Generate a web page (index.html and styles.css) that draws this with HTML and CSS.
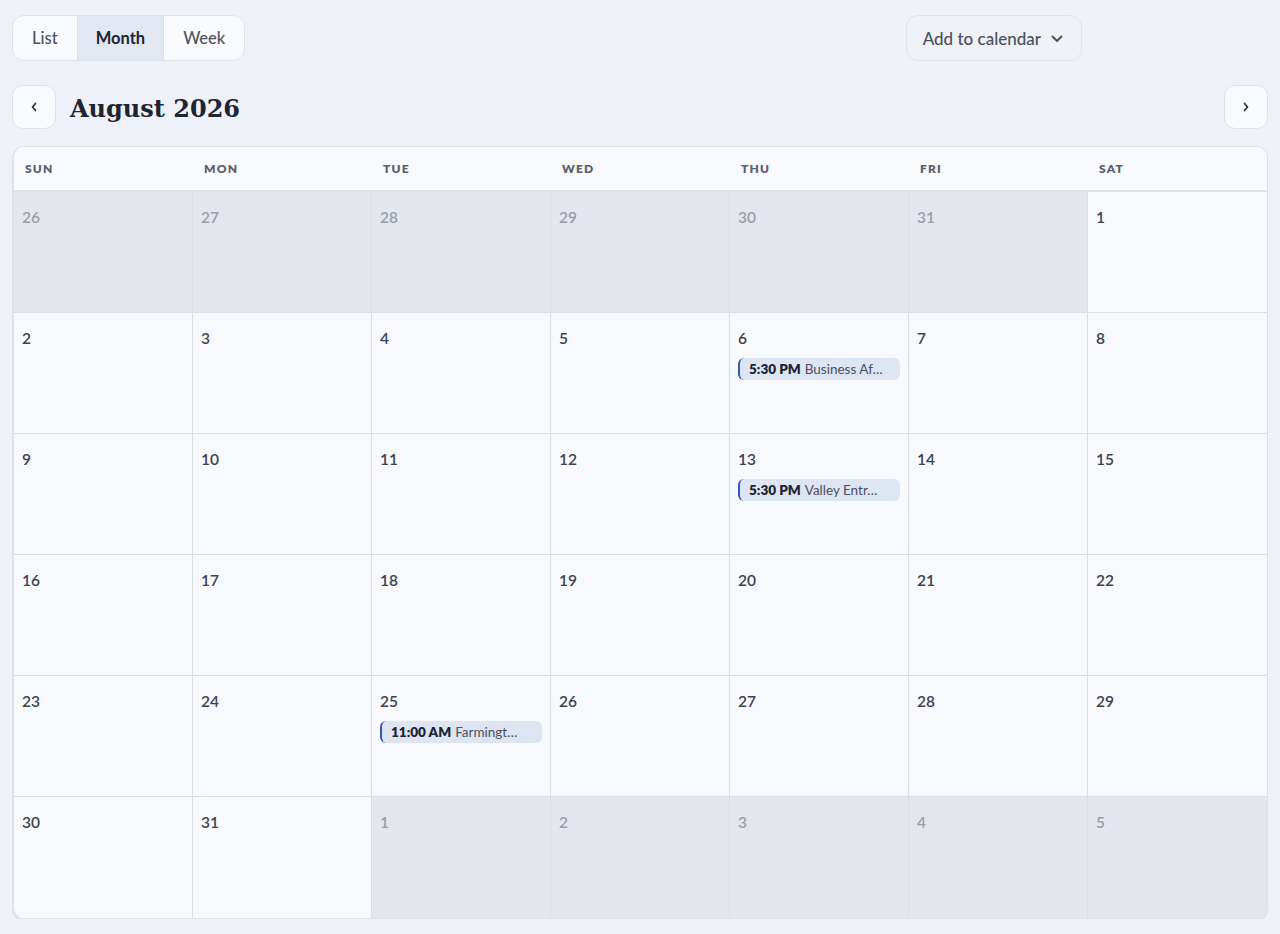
FILE: index.html
```html
<!DOCTYPE html>
<html lang="en">
<head>
<meta charset="utf-8">
<title>August 2026</title>
<link rel="stylesheet" href="styles.css">
</head>
<body>
<div class="page">
  <div class="toolbar">
    <div class="seg">
      <button class="seg-btn">List</button>
      <button class="seg-btn active">Month</button>
      <button class="seg-btn">Week</button>
    </div>
    <button class="add-btn">Add to calendar
      <svg class="caret" width="12" height="8" viewBox="0 0 12 8"><polyline points="1.5,1.5 6,6 10.5,1.5" fill="none" stroke="#4a4f5c" stroke-width="1.8" stroke-linecap="round" stroke-linejoin="round"/></svg>
    </button>
  </div>

  <div class="navrow">
    <div class="nav-left">
      <button class="nav-btn"><svg width="8" height="12" viewBox="0 0 8 12"><polyline points="5.5,2.5 2.5,6 5.5,9.5" fill="none" stroke="#2a2f3a" stroke-width="1.7" stroke-linecap="round" stroke-linejoin="round"/></svg></button>
      <h1 class="title">August 2026</h1>
    </div>
    <button class="nav-btn"><svg width="8" height="12" viewBox="0 0 8 12"><polyline points="2.5,2.5 5.5,6 2.5,9.5" fill="none" stroke="#2a2f3a" stroke-width="1.7" stroke-linecap="round" stroke-linejoin="round"/></svg></button>
  </div>

  <div class="calendar">
    <div class="head">
      <div class="hd">SUN</div><div class="hd">MON</div><div class="hd">TUE</div><div class="hd">WED</div><div class="hd">THU</div><div class="hd">FRI</div><div class="hd">SAT</div>
    </div>
    <div class="grid">
      <div class="cell out"><span class="num">26</span></div>
      <div class="cell out"><span class="num">27</span></div>
      <div class="cell out"><span class="num">28</span></div>
      <div class="cell out"><span class="num">29</span></div>
      <div class="cell out"><span class="num">30</span></div>
      <div class="cell out"><span class="num">31</span></div>
      <div class="cell last"><span class="num">1</span></div>

      <div class="cell"><span class="num">2</span></div>
      <div class="cell"><span class="num">3</span></div>
      <div class="cell"><span class="num">4</span></div>
      <div class="cell"><span class="num">5</span></div>
      <div class="cell"><span class="num">6</span><div class="event"><b>5:30 PM</b> <span>Business Af…</span></div></div>
      <div class="cell"><span class="num">7</span></div>
      <div class="cell last"><span class="num">8</span></div>

      <div class="cell"><span class="num">9</span></div>
      <div class="cell"><span class="num">10</span></div>
      <div class="cell"><span class="num">11</span></div>
      <div class="cell"><span class="num">12</span></div>
      <div class="cell"><span class="num">13</span><div class="event"><b>5:30 PM</b> <span>Valley Entr…</span></div></div>
      <div class="cell"><span class="num">14</span></div>
      <div class="cell last"><span class="num">15</span></div>

      <div class="cell"><span class="num">16</span></div>
      <div class="cell"><span class="num">17</span></div>
      <div class="cell"><span class="num">18</span></div>
      <div class="cell"><span class="num">19</span></div>
      <div class="cell"><span class="num">20</span></div>
      <div class="cell"><span class="num">21</span></div>
      <div class="cell last"><span class="num">22</span></div>

      <div class="cell"><span class="num">23</span></div>
      <div class="cell"><span class="num">24</span></div>
      <div class="cell"><span class="num">25</span><div class="event"><b>11:00 AM</b> <span>Farmingt…</span></div></div>
      <div class="cell"><span class="num">26</span></div>
      <div class="cell"><span class="num">27</span></div>
      <div class="cell"><span class="num">28</span></div>
      <div class="cell last"><span class="num">29</span></div>

      <div class="cell bottom"><span class="num">30</span></div>
      <div class="cell bottom"><span class="num">31</span></div>
      <div class="cell out bottom"><span class="num">1</span></div>
      <div class="cell out bottom"><span class="num">2</span></div>
      <div class="cell out bottom"><span class="num">3</span></div>
      <div class="cell out bottom"><span class="num">4</span></div>
      <div class="cell out bottom last"><span class="num">5</span></div>
    </div>
  </div>
</div>
</body>
</html>
```

FILE: styles.css
```css
* { box-sizing: border-box; }
html, body { margin: 0; padding: 0; }
body {
  background: #eef1f7;
  font-family: Lato, "Open Sans", sans-serif;
  color: #2a2f3a;
}
.page {
  padding: 15px 12px 0 12px;
}
button {
  font-family: inherit;
  cursor: pointer;
}
.toolbar {
  display: flex;
  justify-content: space-between;
  align-items: center;
  padding-right: 186px;
  height: 46px;
}
.seg {
  display: flex;
  height: 46px;
  border: 1px solid #dfe3ea;
  border-radius: 12px;
  background: #f8fafd;
  overflow: hidden;
}
.seg-btn {
  border: 0;
  background: transparent;
  font-size: 16.5px;
  color: #4d5260;
  padding: 0 19px;
  font-weight: 500;
}
.seg-btn.active {
  background: #e2e8f2;
  color: #1e2533;
  font-weight: 700;
  padding: 0 18px;
  border-left: 1px solid #dbe0e8;
  border-right: 1px solid #dbe0e8;
}
.add-btn {
  display: flex;
  align-items: center;
  gap: 10px;
  height: 46px;
  padding: 0 18px 0 16px;
  border: 1px solid #dfe3ea;
  border-radius: 12px;
  background: #eef1f6;
  font-size: 17px;
  color: #4a4f5c;
  font-weight: 500;
}
.caret { margin-top: 1px; }
.navrow {
  display: flex;
  justify-content: space-between;
  align-items: center;
  margin-top: 24px;
}
.nav-left {
  display: flex;
  align-items: center;
  gap: 14px;
}
.nav-btn {
  width: 44px;
  height: 44px;
  display: flex;
  align-items: center;
  justify-content: center;
  border: 1px solid #dfe3ea;
  border-radius: 11px;
  background: #f8fafd;
  padding: 0;
}
.title {
  margin: 0;
  padding-top: 2px;
  font-family: "DejaVu Serif", Georgia, serif;
  font-weight: 700;
  font-size: 24px;
  color: #1f2533;
}
.calendar {
  margin-top: 17px;
  border: 1px solid #dde1e8;
  border-left-width: 2px;
  border-radius: 12px;
  background: #f7f9fd;
  overflow: hidden;
  box-shadow: 0 2px 0 #dde1e7;
}
.head {
  display: grid;
  grid-template-columns: repeat(7, 1fr);
  height: 45px;
  border-bottom: 2px solid #dde1e8;
  background: #f8fafd;
}
.hd {
  display: flex;
  align-items: center;
  padding-left: 11px;
  font-size: 12px;
  font-weight: 800;
  letter-spacing: 1.2px;
  color: #5c616d;
}
.grid {
  display: grid;
  grid-template-columns: repeat(7, 1fr);
  grid-auto-rows: 121px;
}
.cell {
  border-right: 1px solid #d9dde4;
  border-bottom: 1px solid #d9dde4;
  padding: 16px 8px 0 8px;
  background: #f7f9fd;
}
.cell.last { border-right: 0; }
.cell.bottom { border-bottom: 0; }
.cell.out { background: #e3e6ec; }
.num {
  display: block;
  font-size: 15.5px;
  font-weight: 600;
  color: #3d424d;
  line-height: 18px;
}
.cell.out .num { color: #9a9ea7; }
.event {
  margin-top: 11px;
  height: 22px;
  display: flex;
  align-items: center;
  gap: 4px;
  background: #dde4f2;
  border-left: 2px solid #3557b7;
  border-radius: 6px;
  padding: 0 9px;
  font-size: 13.5px;
  white-space: nowrap;
  overflow: hidden;
}
.event b {
  font-weight: 800;
  color: #1e2433;
}
.event span {
  color: #4a505f;
}
```
